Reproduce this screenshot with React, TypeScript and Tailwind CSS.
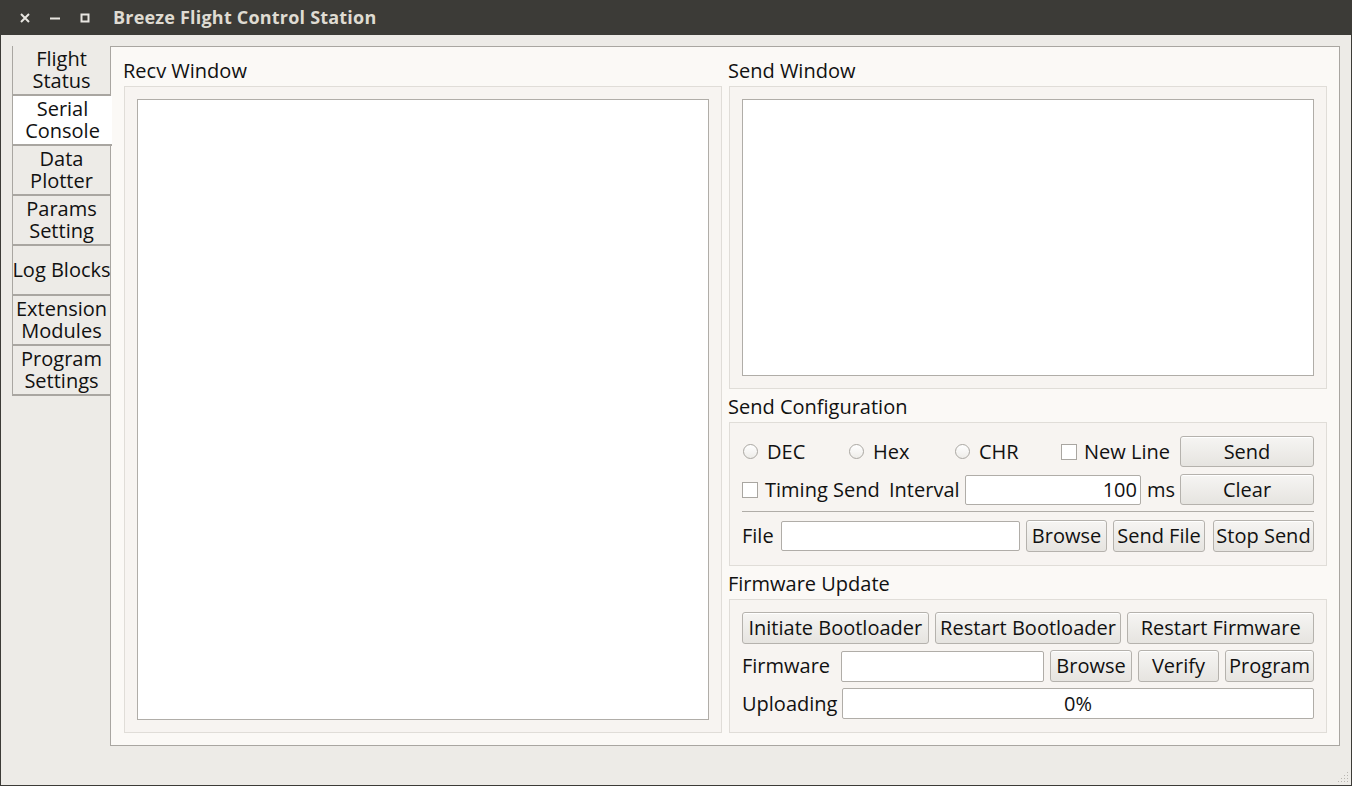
import React from "react";

const btn =
  "flex items-center justify-center whitespace-nowrap rounded-[3px] border border-[#b5b2ad] bg-gradient-to-b from-[#f6f5f3] to-[#e6e4e0] text-[#111] shadow-[inset_0_1px_0_#fff]";
const field = "rounded-[2px] border border-[#b0ada8] bg-white";

const tabs = [
  ["Flight", "Status"],
  ["Serial", "Console"],
  ["Data", "Plotter"],
  ["Params", "Setting"],
  ["Log Blocks"],
  ["Extension", "Modules"],
  ["Program", "Settings"],
];

const Radio = ({ label }: { label: string }) => (
  <div className="flex w-[106px] items-center gap-[9px]">
    <span className="h-[15px] w-[15px] rounded-full border border-[#aaa7a2] bg-gradient-to-b from-white to-[#eeece9]" />
    <span>{label}</span>
  </div>
);

const Check = () => (
  <span className="h-[16px] w-[16px] shrink-0 border border-[#a9a6a1] bg-white" />
);

const GroupTitle = ({ children }: { children: React.ReactNode }) => (
  <div className="mb-[5px] ml-[-1px] h-[20px] whitespace-nowrap leading-[20px]">{children}</div>
);

export default function App() {
  return (
    <div
      className="flex h-[786px] w-[1352px] flex-col overflow-hidden text-[20px] text-[#111]"
      style={{ fontFamily: '"Open Sans", sans-serif' }}
    >
      {/* title bar */}
      <div className="flex h-[35px] shrink-0 items-center bg-[#3c3b37] text-[#dfdbd2]">
        <div className="flex w-[113px] items-center">
          <svg className="ml-[20px]" width="10" height="10" viewBox="0 0 10 10">
            <path d="M1 1L9 9M9 1L1 9" stroke="#e8e6e1" strokeWidth="2" />
          </svg>
          <svg className="ml-[20px]" width="10" height="10" viewBox="0 0 10 10">
            <path d="M0 5.5H10" stroke="#e8e6e1" strokeWidth="2" />
          </svg>
          <svg className="ml-[20px]" width="10" height="10" viewBox="0 0 10 10">
            <rect x="1.5" y="1.5" width="7" height="7" fill="none" stroke="#e8e6e1" strokeWidth="2" />
          </svg>
        </div>
        <span className="text-[18px] font-bold tracking-[0.2px]">Breeze Flight Control Station</span>
      </div>

      {/* window body */}
      <div className="relative flex flex-1 border-x border-b border-[#3c3b37] bg-[#edebe7] pl-[11px] pt-[11px]">
        {/* tabs */}
        <div className="flex w-[99px] shrink-0 flex-col">
          {tabs.map((t, i) => (
            <div
              key={i}
              className={
                "flex h-[50px] flex-col items-center justify-center border-b-2 border-l border-[#a9a6a1] " +
                (i === 1 ? "relative z-10 mr-[-1px] bg-white" : "border-r bg-[#edebe7]") +
                (i === 6 ? " h-[49px] border-b" : "")
              }
            >
              {t.map((l) => (
                <div key={l} className="h-[22px] whitespace-nowrap leading-[22px]">
                  {l}
                </div>
              ))}
            </div>
          ))}
        </div>

        {/* pane */}
        <div className="ml-[-1px] flex h-[700px] w-[1230px] gap-[7px] border border-[#a9a6a1] bg-[#fbf9f6] pl-[13px] pr-[12px] pt-[14px]">
          {/* recv */}
          <div className="flex w-[598px] flex-col">
            <GroupTitle>Recv Window</GroupTitle>
            <div className="h-[647px] border border-[#e0ddd8] bg-[#f7f4f1] p-[12px]">
              <div className="h-full w-full border border-[#b0ada8] bg-white" />
            </div>
          </div>

          {/* right column */}
          <div className="flex w-[598px] flex-col">
            <GroupTitle>Send Window</GroupTitle>
            <div className="h-[303px] border border-[#e0ddd8] bg-[#f7f4f1] p-[12px]">
              <div className="h-full w-full border border-[#b0ada8] bg-white" />
            </div>

            <div className="mt-[8px]">
              <GroupTitle>Send Configuration</GroupTitle>
            </div>
            <div className="flex h-[144px] flex-col border border-[#e0ddd8] bg-[#f7f4f1] px-[12px] pt-[13px]">
              <div className="flex h-[31px] items-center">
                <div className="pl-[1px]" />
                <Radio label="DEC" />
                <Radio label="Hex" />
                <Radio label="CHR" />
                <div className="flex items-center gap-[7px]">
                  <Check />
                  <span>New Line</span>
                </div>
                <div className={btn + " ml-auto h-[31px] w-[134px]"}>Send</div>
              </div>
              <div className="mt-[7px] flex h-[31px] items-center">
                <div className="flex w-[147px] items-center gap-[7px]">
                  <Check />
                  <span className="whitespace-nowrap">Timing Send</span>
                </div>
                <span className="w-[76px]">Interval</span>
                <div className={field + " flex h-[30px] w-[176px] items-center justify-end pr-[3px]"}>100</div>
                <span className="pl-[6px]">ms</span>
                <div className={btn + " ml-auto h-[31px] w-[134px]"}>Clear</div>
              </div>
              <div className="mt-[6px] h-px bg-[#b0ada8]" />
              <div className="mt-[8px] flex h-[32px] items-center gap-[6px]">
                <span className="w-[33px]">File</span>
                <div className={field + " h-[30px] flex-1"} />
                <div className={btn + " h-[32px] w-[81px]"}>Browse</div>
                <div className={btn + " h-[32px] w-[92px]"}>Send File</div>
                <div className={btn + " ml-[2px] h-[32px] w-[101px]"}>Stop Send</div>
              </div>
            </div>

            <div className="mt-[8px]">
              <GroupTitle>Firmware Update</GroupTitle>
            </div>
            <div className="flex h-[134px] flex-col border border-[#e0ddd8] bg-[#f7f4f1] px-[12px] pt-[12px]">
              <div className="grid h-[32px] grid-cols-3 gap-[6px]">
                <div className={btn}>Initiate Bootloader</div>
                <div className={btn}>Restart Bootloader</div>
                <div className={btn}>Restart Firmware</div>
              </div>
              <div className="mt-[6px] flex h-[32px] items-center gap-[6px]">
                <span className="w-[93px]">Firmware</span>
                <div className={field + " h-[31px] flex-1"} />
                <div className={btn + " h-[32px] w-[82px]"}>Browse</div>
                <div className={btn + " h-[32px] w-[81px]"}>Verify</div>
                <div className={btn + " h-[32px] w-[89px]"}>Program</div>
              </div>
              <div className="mt-[6px] flex h-[31px] items-center">
                <span className="w-[100px]">Uploading</span>
                <div className="flex h-[31px] flex-1 items-center justify-center rounded-[2px] border border-[#b0ada8] bg-white">
                  0%
                </div>
              </div>
            </div>
          </div>
        </div>

        {/* resize grip */}
        <svg className="absolute bottom-[2px] right-[2px]" width="12" height="12" viewBox="0 0 12 12">
          {[
            [10, 2],
            [7, 5],
            [10, 5],
            [4, 8],
            [7, 8],
            [10, 8],
            [1, 11],
            [4, 11],
            [7, 11],
            [10, 11],
          ].map(([x, y], i) => (
            <rect key={i} x={x} y={y - 1} width="1" height="1" fill="#b9b6b1" />
          ))}
        </svg>
      </div>
    </div>
  );
}
